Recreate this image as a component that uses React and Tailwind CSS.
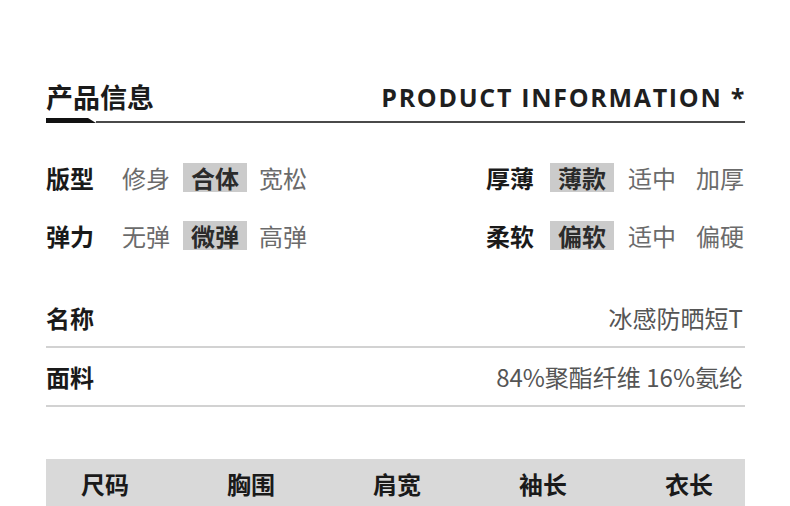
import React from 'react';

const cjk = { fontFamily: '"Noto Sans CJK SC", "Noto Sans", sans-serif' };

function Opt({ text, on, className = '' }) {
    if (on) {
        return (
            <span className={`h-[29px] px-2 flex items-center bg-[#cbcbcb] font-bold text-[#2b2b2b] ${className}`}>
                {text}
            </span>
        );
    }
    return <span className={`h-[29px] flex items-center text-[#6b6b6b] ${className}`}>{text}</span>;
}

function AttrRow({ left, right }) {
    return (
        <div className="flex items-center text-[24px] leading-none">
            <div className="flex items-center">
                <span className="font-bold text-[#1a1a1a]">{left.label}</span>
                <Opt text={left.opts[0]} on={left.sel === 0} className="ml-[28px]" />
                <Opt text={left.opts[1]} on={left.sel === 1} className="ml-[13px]" />
                <Opt text={left.opts[2]} on={left.sel === 2} className="ml-[12px]" />
            </div>
            <div className="flex items-center ml-auto mr-[1px]">
                <span className="font-bold text-[#1a1a1a]">{right.label}</span>
                <Opt text={right.opts[0]} on={right.sel === 0} className="ml-[16px]" />
                <Opt text={right.opts[1]} on={right.sel === 1} className="ml-[14px]" />
                <Opt text={right.opts[2]} on={right.sel === 2} className="ml-[20px]" />
            </div>
        </div>
    );
}

export default function App() {
    return (
        <div className="w-[790px] h-[506px] overflow-hidden bg-white pl-[46px] pr-[45px] pt-[83px]" style={cjk}>
            {/* title */}
            <div className="flex items-end justify-between h-[27px]">
                <span className="text-[27px] leading-none font-bold text-[#1a1a1a]">产品信息</span>
                <span
                    className="text-[25px] leading-none font-bold text-[#1f1f1f] tracking-[1.7px] mr-[-1px]"
                    style={{ fontFamily: '"Open Sans", "Noto Sans", sans-serif' }}
                >
                    PRODUCT INFORMATION *
                </span>
            </div>
            <div className="flex items-end mt-[8px] h-[5px]">
                <div className="w-[50px] h-[5px] bg-[#111] [clip-path:polygon(0_0,84%_0,100%_100%,0_100%)]" />
                <div className="flex-1 h-[2px] bg-[#4a4a4a]" />
            </div>

            {/* attributes */}
            <div className="mt-[40px]">
                <AttrRow
                    left={{ label: '版型', opts: ['修身', '合体', '宽松'], sel: 1 }}
                    right={{ label: '厚薄', opts: ['薄款', '适中', '加厚'], sel: 0 }}
                />
            </div>
            <div className="mt-[29px]">
                <AttrRow
                    left={{ label: '弹力', opts: ['无弹', '微弹', '高弹'], sel: 1 }}
                    right={{ label: '柔软', opts: ['偏软', '适中', '偏硬'], sel: 0 }}
                />
            </div>

            {/* name / fabric */}
            <div className="mt-[39px] text-[24px] leading-none">
                <div className="h-[59px] flex items-center justify-between border-b-2 border-[#d2d2d2]">
                    <span className="font-bold text-[#1a1a1a]">名称</span>
                    <span className="text-[#555] mr-[2px]">冰感防晒短T</span>
                </div>
                <div className="h-[59px] flex items-center justify-between border-b-2 border-[#d2d2d2]">
                    <span className="font-bold text-[#1a1a1a]">面料</span>
                    <span className="text-[#555] mr-[2px]">84%聚酯纤维 16%氨纶</span>
                </div>
            </div>

            {/* size table header */}
            <div className="mt-[52px] h-[50px] bg-[#d9d9d9] flex items-center justify-between pl-[35px] pr-[32px] text-[24px] leading-none font-bold text-[#1a1a1a]">
                <span>尺码</span>
                <span>胸围</span>
                <span>肩宽</span>
                <span>袖长</span>
                <span>衣长</span>
            </div>
        </div>
    );
}
